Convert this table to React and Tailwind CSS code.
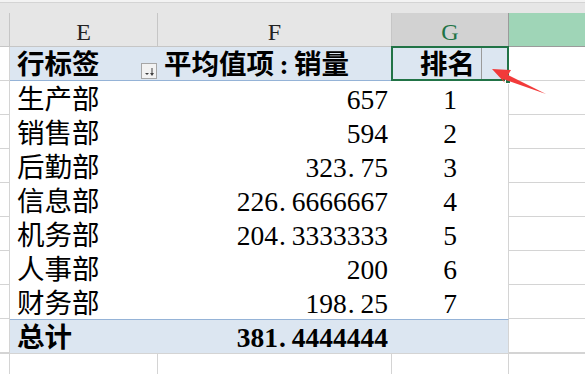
import React from "react";

const rows = [
  ["生产部", "657", "1"],
  ["销售部", "594", "2"],
  ["后勤部", "323.75", "3"],
  ["信息部", "226.6666667", "4"],
  ["机务部", "204.3333333", "5"],
  ["人事部", "200", "6"],
  ["财务部", "198.25", "7"],
];

// SimSun style numbers: the period takes half an em like a digit
function Num({ value }) {
  const parts = value.split(".");
  if (parts.length === 1) return <span>{value}</span>;
  return (
    <span>
      {parts[0]}
      <span className="inline-block w-[0.5em] text-left pl-[1px]">.</span>
      {parts[1]}
    </span>
  );
}

function FilterButton() {
  return (
    <div className="w-[16px] h-[16px] mb-[1px] mr-[1px] self-end border border-[#a6a6a6] bg-[#f2f2f2] flex items-center justify-center">
      <svg width="14" height="14" viewBox="0 0 14 14">
        <polygon points="3,9 7,9 5,11" fill="#404040" />
        <line x1="10" y1="4" x2="10" y2="10" stroke="#404040" strokeWidth="1" />
        <polygon points="8,9 12,9 10,12" fill="#404040" />
      </svg>
    </div>
  );
}

export default function App() {
  return (
    <div
      className="w-[585px] h-[374px] overflow-hidden bg-white relative text-black"
      style={{ fontFamily: '"Liberation Serif", "Noto Sans CJK SC", serif' }}
    >
      {/* top strip */}
      <div className="h-[3px] bg-[#f3f3f3] border-b border-[#d4d4d4]" />
      <div className="h-[10px] bg-[#e6e6e6]" />

      {/* column headers */}
      <div className="flex h-[34px] text-[24px] leading-none">
        <div className="w-[10px] bg-[#e6e6e6] border-r border-b border-[#c6c6c6]" />
        <div className="w-[148px] bg-[#e6e6e6] border-r border-b border-[#c6c6c6] flex items-center justify-center pt-[5px] text-[#222]">E</div>
        <div className="w-[234px] bg-[#e6e6e6] border-r border-b border-[#c6c6c6] flex items-center justify-center pt-[5px] text-[#222]">F</div>
        <div className="w-[117px] bg-[#d2d2d2] border-r border-b border-[#9b9b9b] flex items-center justify-center pt-[5px] text-[#217346]">G</div>
        <div className="flex-1 bg-[#9fd5b7] border-b border-[#9b9b9b]" />
      </div>

      {/* pivot header row */}
      <div className="flex h-[34px] text-[27.5px] font-semibold leading-none">
        <div className="w-[10px] border-r border-b border-[#d4d4d4]" />
        <div className="w-[148px] bg-[#dce6f1] border-b border-[#95b3d7] flex justify-between">
          <span className="pl-[7px] pt-[3px] self-center">行标签</span>
          <FilterButton />
        </div>
        <div className="w-[234px] bg-[#dce6f1] border-b border-[#95b3d7] flex items-center pl-[6px] pt-[3px]">
          平均值项<span className="inline-block w-[20px] text-center">:</span>销量
        </div>
        <div className="w-[117px] bg-[#dce6f1] border-b border-r border-[#95b3d7] relative flex items-center justify-end pr-[33px] pt-[3px]">
          排名
          <div className="absolute left-[89px] top-[1px] bottom-[1px] w-px bg-[#9a9a9a]" />
          <div className="absolute -left-px -top-px -right-px -bottom-px border-2 border-[#217346]" />
          <div className="absolute right-[-3px] bottom-[-4px] w-[6px] h-[6px] bg-[#217346] border border-white" />
        </div>
        <div className="flex-1 border-b border-[#d4d4d4]" />
      </div>

      {/* data rows */}
      {rows.map((r) => (
        <div key={r[0]} className="flex h-[34px] text-[27.5px] leading-none">
          <div className="w-[10px] border-r border-b border-[#d4d4d4]" />
          <div className="w-[148px] flex items-center pl-[7px] pt-[3px]">{r[0]}</div>
          <div className="w-[234px] flex items-center justify-end pr-[4px] pt-[3px]">
            <Num value={r[1]} />
          </div>
          <div className="w-[117px] border-r border-[#d4d4d4] flex items-center justify-center pt-[3px]">{r[2]}</div>
          <div className="flex-1 border-b border-[#d4d4d4]" />
        </div>
      ))}

      {/* total row */}
      <div className="flex h-[34px] text-[27.5px] font-semibold leading-none">
        <div className="w-[10px] border-r border-b border-[#d4d4d4]" />
        <div className="w-[148px] bg-[#dce6f1] border-t border-[#95b3d7] flex items-center pl-[7px] pt-[2px]">总计</div>
        <div className="w-[234px] bg-[#dce6f1] border-t border-[#95b3d7] flex items-center justify-end pr-[4px] pt-[2px]">
          <Num value="381.4444444" />
        </div>
        <div className="w-[117px] bg-[#dce6f1] border-t border-r border-[#95b3d7] border-r-[#d4d4d4]" />
        <div className="flex-1 border-b border-[#d4d4d4]" />
      </div>

      {/* empty row */}
      <div className="flex h-[21px] border-t border-[#d4d4d4]">
        <div className="w-[10px] border-r border-[#d4d4d4]" />
        <div className="w-[148px] border-r border-[#d4d4d4]" />
        <div className="w-[234px] border-r border-[#d4d4d4]" />
        <div className="w-[117px] border-r border-[#d4d4d4]" />
        <div className="flex-1" />
      </div>

      {/* red arrow annotation */}
      <svg className="absolute left-0 top-0 pointer-events-none" width="585" height="374">
        <polygon points="492,69 511,70 508,75 546,94 503,79 505,83" fill="#f23a3a" />
      </svg>
    </div>
  );
}
